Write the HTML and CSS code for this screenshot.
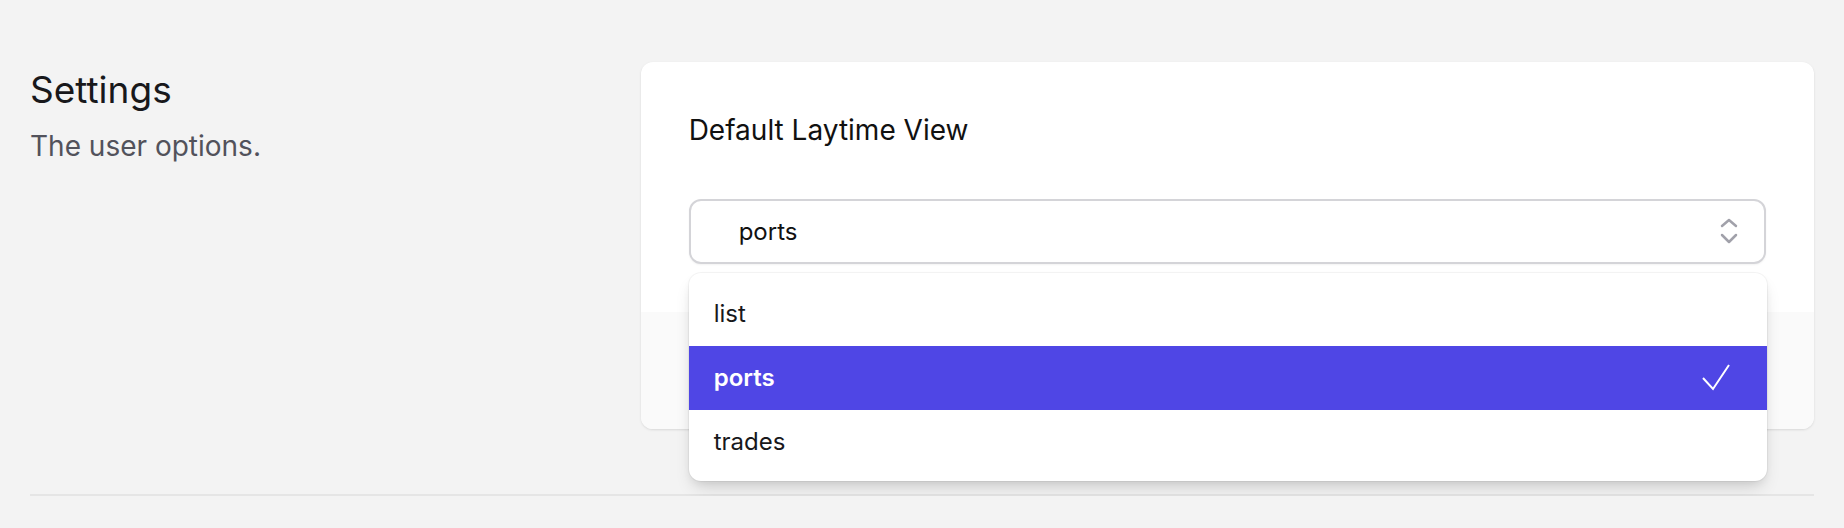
FILE: index.html
```html
<!DOCTYPE html>
<html lang="en">
  <head>
    <meta charset="UTF-8" />
    <meta name="viewport" content="width=device-width, initial-scale=1.0" />
    <title>Settings</title>
    <link rel="stylesheet" href="styles.css">
  </head>
  <body>
    <div class="page">
      <div class="section">
        <div class="intro">
          <h2>Settings</h2>
          <p class="desc">The user options.</p>
        </div>
        <div class="card">
          <div class="card-body">
            <label class="label">Default Laytime View</label>
            <div class="select-wrap">
              <button class="select">
                <span>ports</span>
                <svg class="updown" width="20" height="26" viewBox="0 0 20 26">
                  <polyline points="2,8 9,2 16,8" />
                  <polyline points="2,17 9,24 16,17" />
                </svg>
              </button>
              <ul class="options">
                <li class="option">list</li>
                <li class="option active">
                  <span>ports</span>
                  <svg width="28" height="28" viewBox="0 0 28 28">
                    <polyline points="1,14 11,25 27,1" />
                  </svg>
                </li>
                <li class="option">trades</li>
              </ul>
            </div>
          </div>
          <div class="card-foot"></div>
        </div>
      </div>
      <div class="divider"></div>
    </div>
  </body>
</html>
```

FILE: styles.css
```css
* {
  margin: 0;
  padding: 0;
  box-sizing: border-box;
}
body {
  background-color: #f3f3f3;
  font-family: Inter, "Noto Sans", sans-serif;
  color: #18181b;
}
.page {
  padding: 62px 30px 0 30px;
}
.section {
  display: grid;
  grid-template-columns: repeat(3, 1fr);
  gap: 48px;
}
.intro {
  padding-top: 4px;
}
h2 {
  font-size: 37px;
  line-height: 48px;
  font-weight: 400;
  color: #18181b;
}
.desc {
  margin-top: 12px;
  font-size: 28px;
  line-height: 40px;
  color: #52525b;
}
.card {
  grid-column: span 2;
  background-color: #fff;
  border-radius: 12px;
  box-shadow: 0 1px 3px rgba(0, 0, 0, 0.08), 0 1px 2px rgba(0, 0, 0, 0.04);
}
.card-body {
  padding: 48px;
}
.label {
  display: block;
  font-size: 28px;
  line-height: 40.5px;
  color: #111;
}
.select-wrap {
  position: relative;
  margin-top: 48px;
}
.select {
  width: 100%;
  height: 65px;
  display: flex;
  align-items: center;
  justify-content: space-between;
  padding: 0 24px 0 48px;
  background-color: #fff;
  border: 2px solid #d4d4d8;
  border-radius: 12px;
  box-shadow: 0 1px 2px rgba(0, 0, 0, 0.05);
  font-family: inherit;
  font-size: 24px;
  color: #111;
  text-align: left;
}
.updown polyline {
  fill: none;
  stroke: #a1a1aa;
  stroke-width: 2.5;
  stroke-linecap: round;
  stroke-linejoin: round;
}
.options {
  position: absolute;
  top: calc(100% + 9px);
  left: 0;
  right: -1px;
  list-style: none;
  padding: 9px 0 7px 0;
  background-color: #fff;
  border-radius: 12px;
  box-shadow: 0 0 0 1px rgba(0, 0, 0, 0.04), 0 10px 18px -4px rgba(0, 0, 0, 0.14), 0 4px 8px -2px rgba(0, 0, 0, 0.08);
  z-index: 2;
}
.option {
  height: 64px;
  display: flex;
  align-items: center;
  justify-content: space-between;
  padding: 0 37px 0 25px;
  font-size: 24px;
  color: #18181b;
}
.option.active {
  background-color: #4f46e5;
  color: #fff;
  font-weight: 600;
}
.option polyline {
  fill: none;
  stroke: #fff;
  stroke-width: 2;
}
.card-foot {
  height: 117px;
  background-color: #fafafa;
  border-radius: 0 0 12px 12px;
}
.divider {
  margin-top: 65px;
  border-top: 2px solid #e5e5e5;
}
```
